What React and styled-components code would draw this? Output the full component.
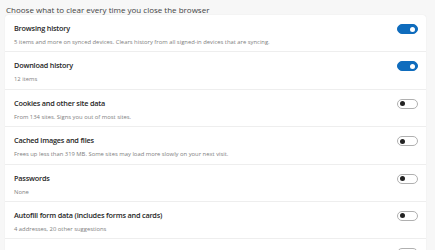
import React from "react";
import styled, { createGlobalStyle } from "styled-components";

const Global = createGlobalStyle`
  html, body { margin: 0; padding: 0; background: #f7f7f7; overflow: hidden; }
  body { font-family: "Open Sans", "Noto Sans", sans-serif; }
`;

const Page = styled.div`
  padding: 6px 9px 0 5px;
  width: 435px;
  box-sizing: border-box;
`;

const Heading = styled.div`
  font-size: 8px;
  line-height: 10px;
  color: #444;
  padding-left: 1px;
  margin-top: -1px;
`;

const Card = styled.div`
  background: #fff;
  border-radius: 3px;
  box-shadow: 0 0 1px rgba(0, 0, 0, 0.12);
`;

const Row = styled.div`
  display: flex;
  justify-content: space-between;
  align-items: flex-start;
  padding: 7px 8px 4.4px 9px;
  border-bottom: 1px solid #eeeeee;
`;

const Text = styled.div`
  display: flex;
  flex-direction: column;
`;

const Title = styled.div`
  font-size: 7.3px;
  line-height: 12px;
  font-weight: 600;
  letter-spacing: -0.2px;
  color: #262626;
`;

const Sub = styled.div`
  font-size: 5.85px;
  line-height: 10px;
  margin-top: 3px;
  color: #808080;
  white-space: nowrap;
`;

const Toggle = styled.div`
  margin-top: 2px;
  width: 21px;
  height: 10px;
  box-sizing: border-box;
  border-radius: 5px;
  display: flex;
  align-items: center;
  justify-content: ${(p) => (p.$on ? "flex-end" : "flex-start")};
  padding: 0 2px;
  background: ${(p) => (p.$on ? "#0f6cbd" : "#fff")};
  border: 1px solid ${(p) => (p.$on ? "#0f6cbd" : "#b0b0b0")};
  flex-shrink: 0;
`;

const Knob = styled.span`
  width: 5px;
  height: 5px;
  border-radius: 50%;
  background: ${(p) => (p.$on ? "#fff" : "#222")};
`;

const items = [
  { t: "Browsing history", s: "5 items and more on synced devices. Clears history from all signed-in devices that are syncing.", on: true },
  { t: "Download history", s: "12 items", on: true },
  { t: "Cookies and other site data", s: "From 134 sites. Signs you out of most sites.", on: false },
  { t: "Cached images and files", s: "Frees up less than 319 MB. Some sites may load more slowly on your next visit.", on: false },
  { t: "Passwords", s: "None", on: false },
  { t: "Autofill form data (includes forms and cards)", s: "4 addresses, 20 other suggestions", on: false },
  { t: "Site permissions", s: "None", on: false },
  { t: "Hosted app data", s: "2 apps", on: false },
];

export default function App() {
  return (
    <Page>
      <Global />
      <Heading>Choose what to clear every time you close the browser</Heading>
      <Card>
        {items.map((it) => (
          <Row key={it.t}>
            <Text>
              <Title>{it.t}</Title>
              <Sub>{it.s}</Sub>
            </Text>
            <Toggle $on={it.on}>
              <Knob $on={it.on} />
            </Toggle>
          </Row>
        ))}
      </Card>
    </Page>
  );
}
